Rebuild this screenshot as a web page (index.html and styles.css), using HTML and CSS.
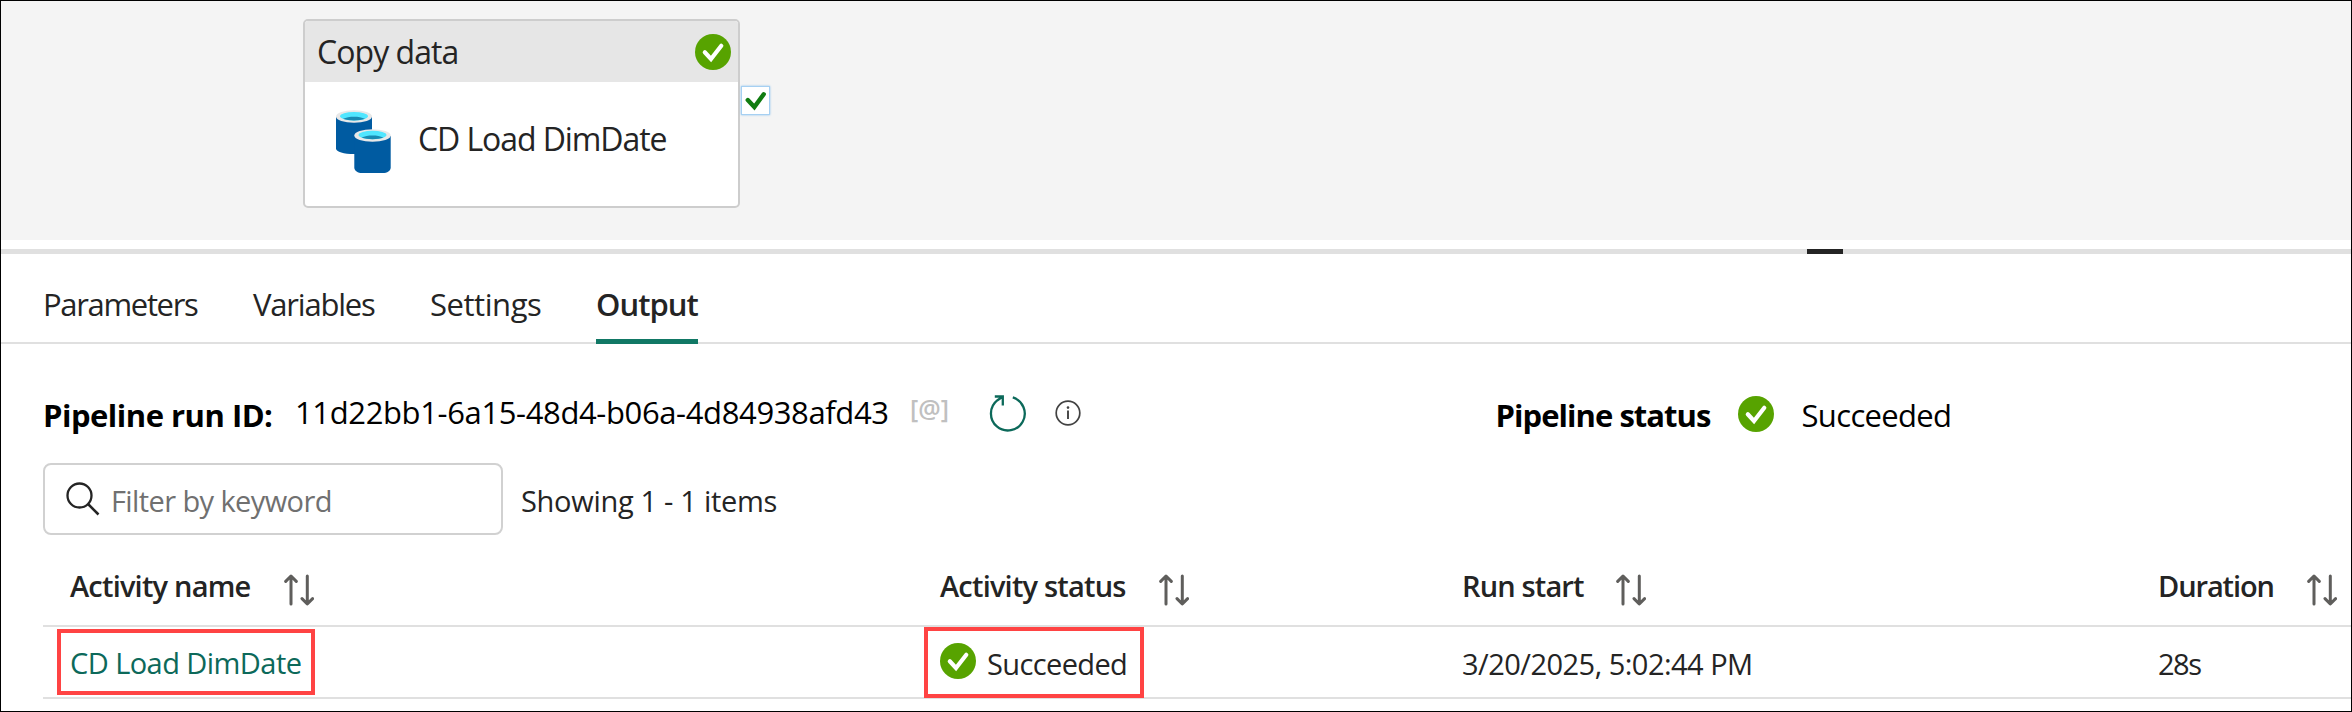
FILE: index.html
```
<!DOCTYPE html>
<html lang="en">
<head>
<meta charset="utf-8">
<title>Pipeline output</title>
<link rel="stylesheet" href="styles.css">
</head>
<body>
<svg class="defs" width="0" height="0">
  <symbol id="ok" viewBox="0 0 36 36">
    <circle cx="18" cy="18" r="18" fill="#57a300"/>
    <path d="M9.8 18.3l6.2 6.7 10.3-13.2" fill="none" stroke="#fff" stroke-width="4.2" stroke-linecap="round" stroke-linejoin="miter"/>
  </symbol>
  <symbol id="sort" viewBox="0 0 30 32">
    <g fill="none" stroke="#5f5e5c" stroke-width="3" stroke-linecap="round" stroke-linejoin="round">
      <path d="M7 30V2.2M1.7 7.4L7 2l5.3 5.4"/>
      <path d="M23.3 2v27.8M18 24.6l5.3 5.4 5.3-5.4"/>
    </g>
  </symbol>
</svg>
<div class="page">
  <section class="canvas">
    <div class="card">
      <div class="card-head"><span class="card-type">Copy data</span><svg class="ok"><use href="#ok"/></svg></div>
      <div class="card-body">
        <svg class="db" viewBox="0 0 56 64">
          <path d="M1 7v31.500C1 42 9 44 19 44s18-2 18-5.500V7z" fill="#005ba1"/>
          <ellipse cx="19" cy="6.500" rx="18" ry="6.200" fill="#e8e8e8"/>
          <ellipse cx="19" cy="6.200" rx="14" ry="4.200" fill="#50e6ff"/>
          <path d="M8 8.800C11 7.300 15 6.700 19 6.700s8 .6 11 2.100c-3 1.100-7 1.600-11 1.600S11 9.900 8 8.800z" fill="#198ab3"/>
          <path d="M19.300 26v31.500c0 3.500 3.500 5.500 8 5.500h20.400c4.500 0 8-2 8-5.500V26z" fill="#005ba1"/>
          <ellipse cx="37.500" cy="25.500" rx="18.200" ry="6.200" fill="#e8e8e8"/>
          <ellipse cx="37.500" cy="25" rx="14" ry="4.200" fill="#50e6ff"/>
          <path d="M26.500 27.600c3-1.500 7-2.100 11-2.100s8 .6 11 2.100c-3 1.100-7 1.600-11 1.600s-8-.5-11-1.600z" fill="#198ab3"/>
        </svg>
        <span class="card-name">CD Load DimDate</span>
      </div>
    </div>
    <div class="port"><svg viewBox="0 0 28 28"><path d="M6 13.500l6.800 7.200L22.500 7.500" fill="none" stroke="#107c10" stroke-width="4.600" stroke-linecap="round"/></svg></div>
  </section>
  <div class="splitter"><div class="handle"></div></div>
  <nav class="tabs">
    <div class="tab t-params">Parameters</div>
    <div class="tab t-vars">Variables</div>
    <div class="tab t-settings">Settings</div>
    <div class="tab t-output">Output</div>
  </nav>
  <div class="run">
    <span class="run-label">Pipeline run ID:</span>
    <span class="run-id">11d22bb1-6a15-48d4-b06a-4d84938afd43</span>
    <span class="expr">[@]</span>
    <svg class="refresh" viewBox="0 0 40 40"><path d="M24.800 4.400A16.900 16.900 0 1 1 9.500 7.200L14.500 3.800M6.800 3.500h8v9" fill="none" stroke="#0c695a" stroke-width="2.300"/></svg>
    <svg class="info" viewBox="0 0 26 26"><circle cx="13" cy="13" r="11.800" fill="none" stroke="#424242" stroke-width="1.700"/><path d="M13 10.500v8.500" stroke="#424242" stroke-width="1.900"/><circle cx="13" cy="7.600" r="1.300" fill="#424242"/></svg>
    <span class="status-label">Pipeline status</span>
    <svg class="ok"><use href="#ok"/></svg>
    <span class="status-value">Succeeded</span>
  </div>
  <div class="filter">
    <div class="search">
      <svg class="glass" viewBox="0 0 34 34"><circle cx="13.500" cy="13.500" r="12" fill="none" stroke="#242424" stroke-width="2.300"/><path d="M22 22l10.500 10.500" stroke="#242424" stroke-width="2.500"/></svg>
      <span class="hint">Filter by keyword</span>
    </div>
    <span class="count">Showing 1 - 1 items</span>
  </div>
  <div class="table">
    <div class="row head">
      <div class="cell name"><span class="h-name">Activity name</span><svg class="sort"><use href="#sort"/></svg></div>
      <div class="cell"><span class="h-status">Activity status</span><svg class="sort"><use href="#sort"/></svg></div>
      <div class="cell"><span class="h-start">Run start</span><svg class="sort"><use href="#sort"/></svg></div>
      <div class="cell"><span class="h-dur">Duration</span><svg class="sort"><use href="#sort"/></svg></div>
    </div>
    <div class="row data">
      <div class="cell name"><span class="link">CD Load DimDate</span><i class="mark mark-name"></i></div>
      <div class="cell"><svg class="ok"><use href="#ok"/></svg><span class="state">Succeeded</span><i class="mark mark-state"></i></div>
      <div class="cell"><span class="start">3/20/2025, 5:02:44 PM</span></div>
      <div class="cell"><span class="dur">28s</span></div>
    </div>
  </div>
</div>
</body>
</html>
```
FILE: styles.css
```
* { box-sizing: border-box; }
body { margin: 0; background: #fff; font-family: "Open Sans", "Noto Sans", sans-serif; color: #242424; }
svg { display: block; flex: none; }
span { flex: none; white-space: nowrap; }
.defs { position: absolute; }
.page { width: 2352px; height: 712px; border: 1px solid #000; overflow: hidden; }
.ok { width: 36px; height: 36px; }

.canvas { position: relative; height: 239px; background: #f4f4f4; }
.card { position: absolute; left: 302px; top: 18px; width: 437px; height: 189px; border: 2px solid #cdcdcd; border-radius: 5px; background: #fff; overflow: hidden; font-size: 32px; line-height: 40px; }
.card-head { display: flex; align-items: center; justify-content: space-between; height: 61px; padding: 0 7px 0 12px; background: #e6e6e6; }
.card-type { letter-spacing: -0.95px; }
.card-body { display: flex; align-items: center; height: 124px; padding: 0 0 12px 30px; gap: 26px; }
.db { width: 56px; height: 64px; margin-top: 7px; }
.card-name { margin: 2px 0 0 1px; letter-spacing: -1.08px; }
.port { position: absolute; left: 740px; top: 85px; width: 29px; height: 29px; background: #fff; border: 1px solid #a6d0f2; box-shadow: 0 0 2px #8fc4ee; }
.port svg { width: 27px; height: 27px; }

.splitter { margin-top: 9px; height: 5px; padding-left: 1806px; background: #e0e0e0; }
.handle { width: 36px; height: 5px; background: #242424; }

.tabs { display: flex; height: 90px; padding-left: 42px; border-bottom: 2px solid #e0e0e0; font-size: 31px; line-height: 40px; }
.tab { height: 90px; padding-top: 30px; }
.t-params { width: 210px; letter-spacing: -1.33px; }
.t-vars { width: 177px; letter-spacing: -1.2px; }
.t-settings { width: 166px; letter-spacing: -0.45px; }
.t-output { width: 102px; font-weight: 600; letter-spacing: -0.95px; border-bottom: 5px solid #117865; }

.run { display: flex; align-items: flex-start; margin-top: 51px; height: 40px; padding-left: 42px; font-size: 31px; line-height: 40px; color: #000; }
.run-label { width: 252px; font-weight: 700; letter-spacing: -0.5px; }
.run-id { width: 615px; margin-top: -3px; letter-spacing: -0.37px; }
.expr { width: 78px; margin-top: -7px; font-size: 25px; font-weight: 600; color: #c0c0c0; }
.refresh { width: 40px; height: 40px; margin-top: -2px; }
.info { width: 26px; height: 26px; margin: 5px 0 0 27px; }
.status-label { margin-left: 414.500px; width: 242px; font-weight: 700; letter-spacing: -0.96px; }
.run .ok { margin-top: 1px; }
.status-value { margin-left: 28px; letter-spacing: -0.66px; }

.filter { display: flex; align-items: center; margin: 28px 0 0 42px; height: 72px; gap: 18px; font-size: 29px; line-height: 40px; }
.search { display: flex; align-items: center; width: 460px; height: 72px; padding-left: 21px; border: 2px solid #d1d1d1; border-radius: 8px; }
.glass { width: 34px; height: 34px; }
.hint { margin: 3px 0 0 11px; letter-spacing: -0.6px; color: #707070; }
.count { margin-top: 3px; letter-spacing: -0.3px; }

.table { margin-left: 42px; font-size: 29px; line-height: 40px; }
.row { display: grid; grid-template-columns: 897px 521px 697px 1fr; border-bottom: 2px solid #e0e0e0; }
.cell { display: flex; position: relative; }
.name { padding-left: 27px; }
.head { height: 92px; padding-top: 31px; font-weight: 600; }
.sort { width: 30px; height: 32px; margin-top: 8px; }
.h-name { width: 214px; letter-spacing: -0.8px; }
.h-status { width: 219px; letter-spacing: -0.8px; }
.h-start { width: 155px; padding-left: 1px; letter-spacing: -0.85px; }
.h-dur { width: 149px; letter-spacing: -1.1px; }
.data { height: 72px; }
.data .cell { padding-top: 17px; }
.link { margin-top: -1px; letter-spacing: -0.56px; color: #0c695a; }
.state { margin-left: 11px; letter-spacing: -0.62px; }
.data .ok { margin-top: -1px; }
.start { padding-left: 1px; letter-spacing: -0.52px; }
.dur { letter-spacing: -1.500px; }
.mark { position: absolute; border: 4px solid #ff4343; }
.mark-name { left: 14px; top: 2px; width: 258px; height: 66px; }
.mark-state { left: -16px; top: 0; width: 220px; height: 71px; }
```
